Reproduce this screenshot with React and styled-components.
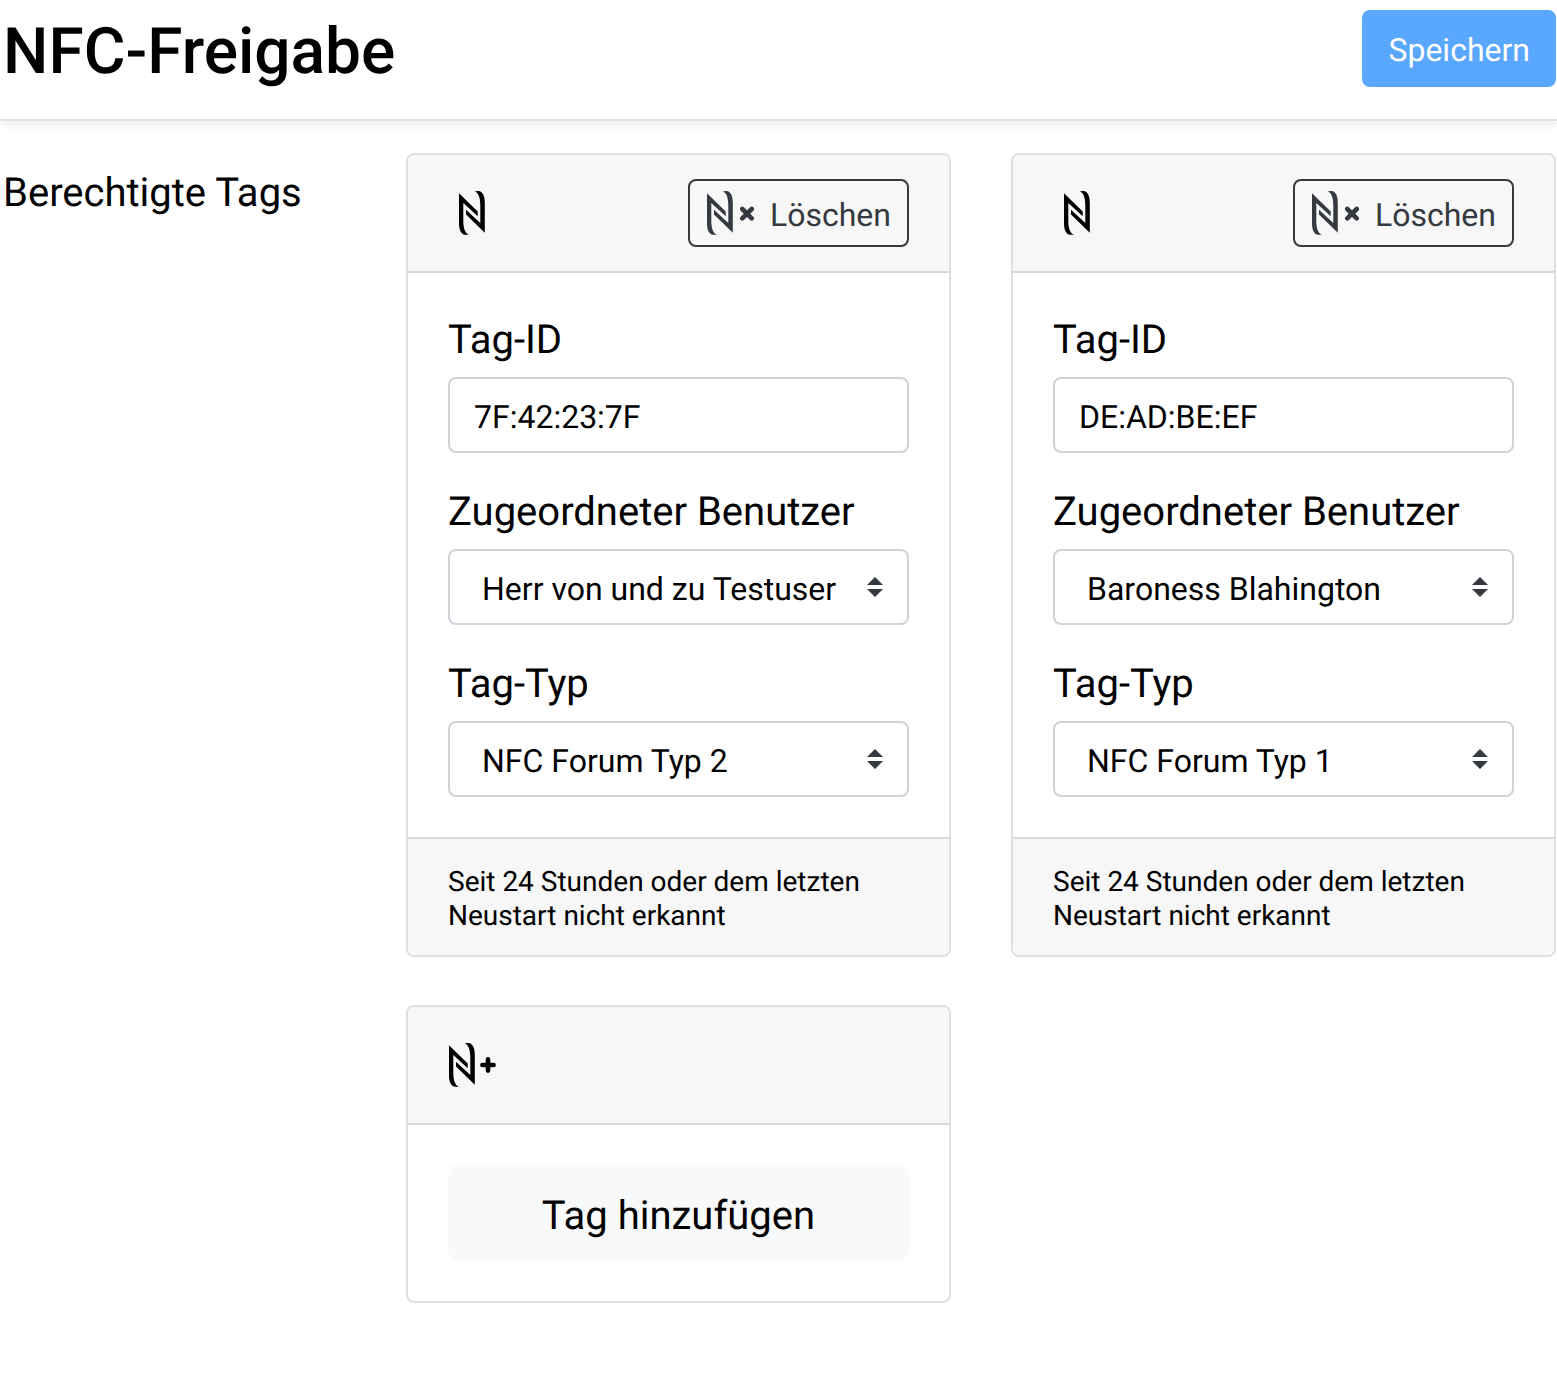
import React, { useId, useState } from 'react';
import styled, { createGlobalStyle } from 'styled-components';

const GlobalStyle = createGlobalStyle`
  *, *::before, *::after { box-sizing: border-box; }
  body {
    margin: 0;
    background: #fff;
    color: #000;
    font-family: Roboto, "Liberation Sans", sans-serif;
    font-size: 40px;
    line-height: 48px;
    text-rendering: geometricPrecision;
  }
  button, input, select { font-family: inherit; color: inherit; text-rendering: inherit; }
`;

const Header = styled.header`
  display: flex;
  align-items: center;
  justify-content: space-between;
  padding: 10px 1px 32px 3px;
  border-bottom: 2px solid #dee2e6;
  box-shadow: 0 4px 8px rgba(0, 0, 0, 0.075);
`;

const Title = styled.h1`
  margin: 0;
  padding-top: 6px;
  font-size: 64px;
  line-height: 71px;
  font-weight: 500;
`;

const SaveButton = styled.button`
  padding: 16px 24px 12px;
  border: 2px solid #59a7ff;
  border-radius: 8px;
  background: #59a7ff;
  color: #fff;
  font-size: 32px;
  line-height: 45px;
`;

const Main = styled.main`
  display: grid;
  grid-template-columns: 3fr 10fr;
  column-gap: 60px;
  padding: 32px 1px;
`;

const SectionTitle = styled.h2`
  margin: 0;
  padding: 16px 2px;
  font-size: 40px;
  line-height: 48px;
  font-weight: 400;
  white-space: nowrap;
`;

const Cards = styled.div`
  display: grid;
  grid-template-columns: repeat(2, minmax(0, 1fr));
  gap: 48px 60px;
  align-items: start;
`;

const Card = styled.section`
  border: 2px solid #dfdfdf;
  border-radius: 8px;
  overflow: hidden;
`;

const CardHeader = styled.div`
  display: flex;
  align-items: center;
  justify-content: space-between;
  min-height: 118px;
  padding: 24px 40px;
  background: #f7f7f7;
  border-bottom: 2px solid #d8d8d8;
`;

const CardBody = styled.div`
  display: flex;
  flex-direction: column;
  gap: 32px;
  padding: 40px;
`;

const CardFooter = styled.div`
  padding: 26px 40px 22px;
  background: #f7f7f7;
  border-top: 2px solid #d8d8d8;
  font-size: 28px;
  line-height: 34px;
`;

const DeleteButton = styled.button`
  display: flex;
  align-items: center;
  gap: 16px;
  height: 68px;
  padding: 0 16px;
  border: 2px solid #343a40;
  border-radius: 8px;
  background: transparent;
  color: #343a40;
  font-size: 32px;
  line-height: 48px;
`;

const DeleteText = styled.span`
  padding-top: 4px;
`;

const AddButton = styled.button`
  padding: 27px 24px 21px;
  border: 0;
  border-radius: 10px;
  background: #f8f9fb;
  font-size: 40px;
  line-height: 48px;
`;

const Field = styled.div`
  display: flex;
  flex-direction: column;
  gap: 10px;
`;

const Label = styled.label`
  line-height: 54px;
`;

const TextInput = styled.input`
  width: 100%;
  height: 76px;
  padding: 4px 24px 0;
  border: 2px solid #ced4da;
  border-radius: 8px;
  background: #fff;
  font-size: 32px;
`;

const SelectWrap = styled.div`
  position: relative;
  display: flex;
`;

const Select = styled.select`
  appearance: none;
  width: 100%;
  height: 76px;
  padding: 4px 56px 0 32px;
  border: 2px solid #ced4da;
  border-radius: 8px;
  background: #fff;
  font-size: 32px;
`;

const Arrows = styled.svg`
  position: absolute;
  right: 26px;
  top: 28px;
  pointer-events: none;
`;

const Icon = styled.svg`
  display: block;
  flex: none;
`;

function NfcIcon({ sign }) {
  return (
    <Icon width="48" height="44" viewBox="0 0 48 44" fill="currentColor" aria-hidden="true">
      <g transform={sign ? 'translate(1 0)' : 'translate(11 0)'}>
        <path d="M0 2.3 18.7 20.4V25.2L4.3 12V29.5C4.3 37 6 42.3 10 43.7L5.6 43.8C1.4 42.6 0 38 0 32Z" />
        <path d="M25.8 41.8 7 23.4V18.8L21.3 32V14.3C21.3 7 19.6 1.6 15.6.2L20 .1C24.3 1.3 25.8 5.8 25.8 12Z" />
      </g>
      {sign === 'plus' && (
        <path d="M40 16.4V27.6M34.4 22H45.6" stroke="currentColor" strokeWidth="4.6" strokeLinecap="round" />
      )}
      {sign === 'times' && (
        <path d="M36.3 18 45.7 27.4M45.7 18 36.3 27.4" stroke="currentColor" strokeWidth="4.6" strokeLinecap="round" />
      )}
    </Icon>
  );
}

function InputField({ label, initial }) {
  const id = useId();
  const [value, setValue] = useState(initial);
  return (
    <Field>
      <Label htmlFor={id}>{label}</Label>
      <TextInput id={id} type="text" value={value} onChange={(e) => setValue(e.target.value)} />
    </Field>
  );
}

function SelectField({ label, initial, options }) {
  const id = useId();
  const [value, setValue] = useState(initial);
  return (
    <Field>
      <Label htmlFor={id}>{label}</Label>
      <SelectWrap>
        <Select id={id} value={value} onChange={(e) => setValue(e.target.value)}>
          {options.map((option) => (
            <option key={option}>{option}</option>
          ))}
        </Select>
        <Arrows width="16" height="20" viewBox="0 0 16 20" fill="#343a40" aria-hidden="true">
          <path d="M0 8 8 0 16 8ZM0 12 8 20 16 12Z" />
        </Arrows>
      </SelectWrap>
    </Field>
  );
}

const users = ['Herr von und zu Testuser', 'Baroness Blahington'];
const types = ['NFC Forum Typ 1', 'NFC Forum Typ 2'];
const tags = [
  { id: '7F:42:23:7F', user: users[0], type: types[1] },
  { id: 'DE:AD:BE:EF', user: users[1], type: types[0] },
];

export default function App() {
  return (
    <>
      <GlobalStyle />
      <Header>
        <Title>NFC-Freigabe</Title>
        <SaveButton type="button">Speichern</SaveButton>
      </Header>
      <Main>
        <SectionTitle>Berechtigte Tags</SectionTitle>
        <Cards>
          {tags.map((tag) => (
            <Card key={tag.id}>
              <CardHeader>
                <NfcIcon />
                <DeleteButton type="button">
                  <NfcIcon sign="times" />
                  <DeleteText>Löschen</DeleteText>
                </DeleteButton>
              </CardHeader>
              <CardBody>
                <InputField label="Tag-ID" initial={tag.id} />
                <SelectField label="Zugeordneter Benutzer" initial={tag.user} options={users} />
                <SelectField label="Tag-Typ" initial={tag.type} options={types} />
              </CardBody>
              <CardFooter>Seit 24 Stunden oder dem letzten Neustart nicht erkannt</CardFooter>
            </Card>
          ))}
          <Card>
            <CardHeader>
              <NfcIcon sign="plus" />
            </CardHeader>
            <CardBody>
              <AddButton type="button">Tag hinzufügen</AddButton>
            </CardBody>
          </Card>
        </Cards>
      </Main>
    </>
  );
}
